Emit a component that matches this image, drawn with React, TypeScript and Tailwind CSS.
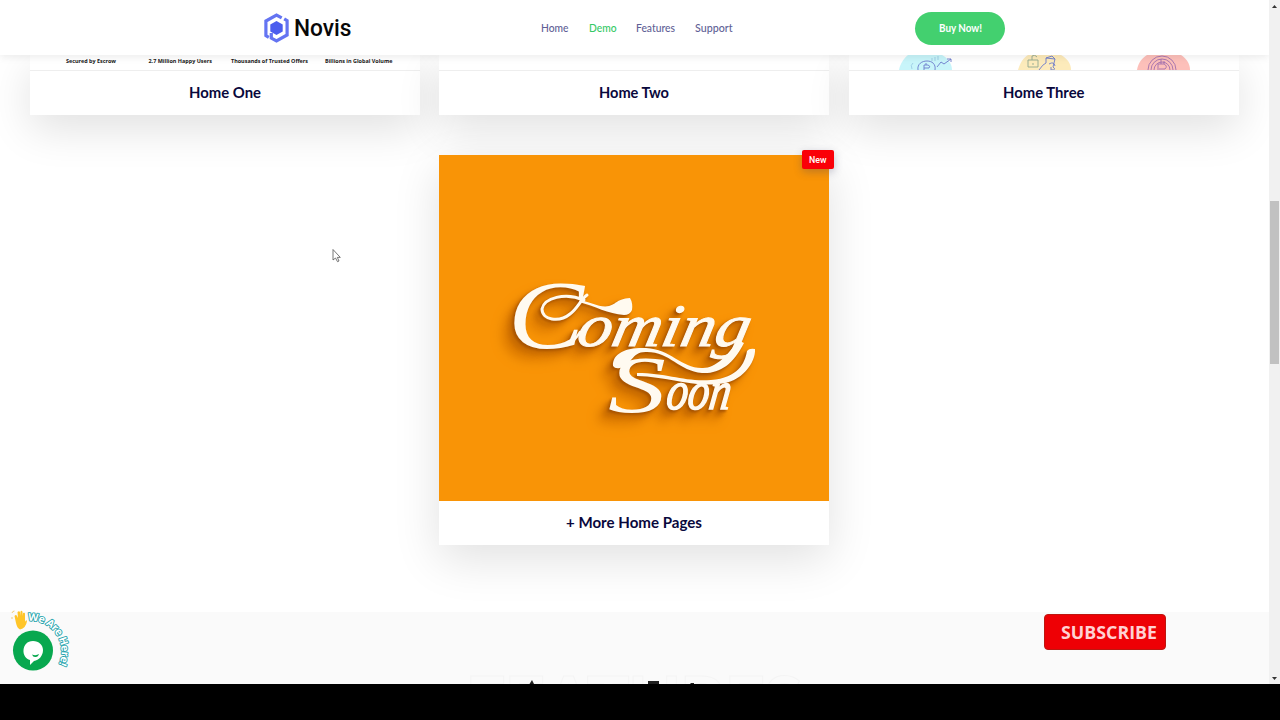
import React from 'react';

const navItems = [{
  name: 'Home',
  width: 27.5,
  active: false
}, {
  name: 'Demo',
  width: 27.5,
  active: true
}, {
  name: 'Features',
  width: 39,
  active: false
}, {
  name: 'Support',
  width: 37.5,
  active: false
}];

const stats = [
  { label: 'Secured by Escrow', x: 36, width: 50 },
  { label: '2.7 Million Happy Users', x: 118.5, width: 63.5 },
  { label: 'Thousands of Trusted Offers', x: 201, width: 77 },
  { label: 'Billions in Global Volume', x: 295, width: 67.5 },
];

const Label = ({ text, width, size, color, weight = 600, font = 'Lato' }: {
  text: string; width: number; size: number; color: string; weight?: number; font?: string;
}) => <svg width={width} height={size * 1.5} className="overflow-visible shrink-0">
    <text x="0" y={size * 1.1} textLength={width} lengthAdjust="spacingAndGlyphs" fontSize={size} fontWeight={weight} fill={color} fontFamily={`${font}, sans-serif`}>{text}</text>
  </svg>;

const Logo = () => <a className="flex items-center gap-[5px]">
    <svg className="w-[25px] h-[30px]" viewBox="0 0 25 30">
      <g fill="none" stroke="#6474f2" strokeWidth="3.2">
        <path d="M4.8 24.3 L1.9 22.6 V8 L12.5 2 L17.7 4.9" />
        <path d="M20.2 5.9 L23.1 7.6 V22 L12.5 28 L7.3 25.1 V20" />
      </g>
      <path d="M12.5 8 L18.700 11.500 V18.600 L12.5 22 L6.300 18.600 V11.500 Z" fill="#4b5dee" />
    </svg>
    <Label text="Novis" width={57.5} size={24} color="#080808" weight={500} font="Roboto" />
  </a>;

const Header = () => <header className="relative z-20 h-[55px] shrink-0 bg-white shadow-[0_2px_8px_rgba(0,0,0,0.08)] flex items-center">
    <div className="w-[541px] pl-[264px] pt-px">
      <Logo />
    </div>
    <nav className="w-[374px] flex items-center gap-5">
      {navItems.map(item => <a key={item.name} className="pt-px">
          <Label text={item.name} width={item.width} size={10.8} color={item.active ? '#35c965' : '#5f5f96'} weight={500} />
        </a>)}
    </nav>
    <button className="w-[90px] h-[33px] mt-px rounded-full bg-[#43d06f] flex items-center justify-center">
      <Label text="Buy Now!" width={43} size={10.5} color="#ffffff" weight={700} />
    </button>
  </header>;

const HomeOnePreview = () => <svg className="w-full h-[15px] block" viewBox="0 0 390 15">
    {stats.map(s => <text key={s.label} x={s.x} y="8.2" textLength={s.width} lengthAdjust="spacingAndGlyphs" fontFamily="Open Sans, sans-serif" fontSize="5.7" fontWeight="700" fill="#161616">{s.label}</text>)}
  </svg>;

const HomeThreePreview = () => <svg className="w-full h-[15px] block" viewBox="0 0 390 15">
    <path d="M50 15 C51 9 55 3 59 0 H93 C99 3 103 9 103 15 Z" fill="#c8f5fa" />
    <path d="M169 15 C171 8 174 3 179 0 H212 C219 4 222 9 222 15 Z" fill="#fdebbb" />
    <path d="M288 15 C289 8 293 3 298 0 H332 C338 4 341 9 341 15 Z" fill="#fdc0ba" />
    <g fill="none" stroke="#6c7acc" strokeWidth=".9">
      <path d="M69 15 C68 9 73 6 78 6 S87 9 86 15 M75 15 V10 H79 Q82 11 80 13 H75 M77 8 V10 M88 12 L92 7 L95 9 L102 4 M98 4 H102 V7" />
      <path d="M83 6 V3 M86 6 V2 M89 5 V1 M63 14 Q61 10 64 8" stroke="#9bcce4" />
      <path d="M190 15 Q194 9 197 8 L197 3 L206 4 L204 12 Q208 15 202 15 M197 3 L203 1 L206 4 M200 9 Q205 6 206 11 M202 15 V12" />
      <path d="M179 5 H189 V12 H179 Z M183 5 V1 Q186 -1 188 2 M184 8 V10" stroke="#91a891" />
      <path d="M299 15 A14 14 0 0 1 327 15 M302 15 A11 11 0 0 1 324 15 M305 15 A8 8 0 0 1 321 15 M309 15 V9 H315 Q319 11 316 14 H310 M312 9 V4 M315 9 V6" stroke="#a26fae" />
    </g>
  </svg>;

const Card = ({ title, width, children }: { title: string; width: number; children?: React.ReactNode }) =>
  <article className="w-[390px] shrink-0 bg-white shadow-[0_14px_44px_rgba(0,0,0,0.12)]">
    {children}
    <div className="h-11 flex items-center justify-center">
      <Label text={title} width={width} size={14.6} color="#09083c" weight={700} />
    </div>
  </article>;

const ComingSoon = () => <svg className="w-[390px] h-[346px] block bg-[#f99406]" viewBox="0 0 390 346">
    <g className="[filter:drop-shadow(-2px_2px_1px_#a85400)_drop-shadow(-4px_4px_2px_#c86b00)_drop-shadow(-6px_6px_4px_#dc7a00)]">
      <g fill="#fffaf0" fontFamily="Liberation Serif, serif" fontStyle="italic">
        <text x="69" y="193" fontSize="98" textLength="76" lengthAdjust="spacingAndGlyphs">C</text>
        <g transform="translate(136 191) skewX(-12)">
          <text x="0" y="0" fontSize="60" textLength="172" lengthAdjust="spacingAndGlyphs" stroke="#fffaf0" strokeWidth="1">oming</text>
        </g>
        <text x="169" y="257" fontSize="80" textLength="58" lengthAdjust="spacingAndGlyphs">S</text>
        <g transform="translate(226 254) skewX(-8)">
          <text x="0" y="0" fontSize="54" textLength="64" lengthAdjust="spacingAndGlyphs" stroke="#fffaf0" strokeWidth="1.600">oon</text>
        </g>
      </g>
      {/* flourishes around the lettering */}
      <g fill="#fffaf0">
        <path d="M141 145 C151 147 161 153 170 151 C178 149 177 144 191 143 Q194 148 193 155 Q191 160 185 160 C169 159 156 151 140 147 Z" />
        <path d="M174 211 C173 197 190 192 207 193 C232 194 243 214 264 213 C277 213 289 200 299 185 L305 188 C294 210 280 219 263 218 C240 216 231 197 208 197 C192 196 193 211 181 213 Q176 214 174 211 Z" />
        <path d="M198 218 C229 218 245 227 272 225 C299 223 306 208 308 196 Q310 193 316 194 C317 207 303 228 279 229 C252 232 230 222 198 221 Z" />
      </g>
      <g fill="none" stroke="#fffaf0" strokeLinecap="round">
        <path d="M145 145 C126 137 105 143 103 154 C103 165 120 168 131 159 C139 153 142 144 148 140" strokeWidth="3" />
        <path d="M128 190 Q136 186 141 177" strokeWidth="2.500" />
      </g>
    </g>
  </svg>;

const Scrollbar = () => <aside className="w-[11px] shrink-0 bg-[#f1f1f1] flex flex-col items-center">
    <svg className="w-[11px] h-[201px]" viewBox="0 0 11 201"><path d="M3 8 L5.5 5 L8 8 Z" fill="#333" /></svg>
    <div className="w-[9px] h-[163px] bg-[#c1c1c1]" />
    <svg className="w-[11px] h-[320px]" viewBox="0 0 11 320"><path d="M3 313 L5.5 316 L8 313 Z" fill="#333" /></svg>
  </aside>;

const ChatWidget = () => <svg className="absolute left-0 top-[604px] w-20 h-[72px]" viewBox="0 0 80 72">
    <defs>
      <path id="chat-arc" d="M26.500 17 A31 31 0 0 1 54 68" />
    </defs>
    <circle cx="33" cy="46.5" r="20" fill="#08a84f" />
    <path d="M33 37 C39 37 43 41 43 46 C43 52 39 56 34 57 L30 61 V56 C26 55 23 51 23.500 46 C24 41 27 37 33 37 Z" fill="#fff" />
    <path d="M32 50.500 Q36 52 39 50 Q38 53.500 35 53 Q33 53 32 50.500 Z" fill="#08a84f" />
    <path d="M16 19 L14.500 12 Q16 10 17 12 L18 14 L17.500 8 Q19 6.500 20 8 L20.500 12 V7.500 Q22 6 22.500 8 V12 L23 9 Q25 8 25 10 V18 Q26 15 27 17 Q26 24 20 25.500 Q17 24 16 19 Z" fill="#ffc529" />
    <path d="M12 9 Q12.500 7 14.500 7 M12 13 V15" fill="none" stroke="#ecc35b" strokeWidth=".8" />
    <text fontFamily="Open Sans, sans-serif" fontSize="10.500" fontWeight="700" fill="#fff" stroke="#25a3ac" strokeWidth="1.800" paintOrder="stroke" strokeLinejoin="round">
      <textPath href="#chat-arc" startOffset="1.500" textLength="64">We Are Here!</textPath>
    </text>
  </svg>;

const App = () => {
  return <div className="relative w-[1280px] h-[720px] bg-black overflow-hidden">
      <div className="flex h-[684px]">
        <main className="w-[1269px] shrink-0 bg-white flex flex-col overflow-hidden">
          <Header />
          <section className="h-[557px] shrink-0">
            <div className="flex gap-[19.500px] pl-[29.500px]">
              <Card title="Home One" width={72}>
                <div className="border-b border-[#eeeeee]"><HomeOnePreview /></div>
              </Card>
              <Card title="Home Two" width={70}>
                <div className="h-4 border-b border-[#eeeeee]" />
              </Card>
              <Card title="Home Three" width={81.5}>
                <div className="border-b border-[#eeeeee]"><HomeThreePreview /></div>
              </Card>
            </div>
            <div className="flex pl-[439px] pt-[39.500px]">
              <div className="relative">
                <Card title="+ More Home Pages" width={136}>
                  <ComingSoon />
                </Card>
                <span className="absolute -top-[5px] right-[-5px] w-8 h-[19px] rounded-[2px] bg-[#fa0008] shadow-[0_3px_8px_rgba(60,60,100,0.3)] flex items-center justify-center pt-px">
                  <Label text="New" width={17.5} size={9} color="#ffffff" weight={500} font="Roboto" />
                </span>
              </div>
            </div>
          </section>
          <section className="h-[72px] shrink-0 bg-[#fafafa] flex flex-col items-center justify-between overflow-hidden">
            <div className="w-full pl-[1044px] pt-[2px]">
              <button className="w-[122px] h-9 rounded-[4px] bg-[#ee0005] border border-[#bd1710] flex items-center justify-center pl-[7px] pt-[2px]">
                <Label text="SUBSCRIBE" width={96} size={17} color="#ffd1d3" weight={700} font="Open Sans" />
              </button>
            </div>
            {/* top edge of the next section heading */}
            <svg className="w-[340px] h-[10px] overflow-hidden" viewBox="0 0 340 10">
              <text x="0" y="55" textLength="338" fontFamily="Lato, sans-serif" fontSize="72" fontWeight="700" fill="none" stroke="#f4f4f4">FEATURES</text>
              <path d="M64.500 10 L67 6 L69 10 Z M183 7 H194 V10 H183 Z M225.500 9 H229 V10 H225.500 Z" fill="#202020" />
            </svg>
          </section>
        </main>
        <Scrollbar />
      </div>
      <ChatWidget />
      <svg className="absolute left-[332px] top-[248px] w-[10px] h-[15px] z-30" viewBox="0 0 10 15">
        <path d="M1 1.500 V12 L3.500 10 L5.500 13.700 L7 13 L5.300 9.400 H8.300 Z" fill="#fff" stroke="#555" strokeWidth=".8" />
      </svg>
    </div>;
};
export default App;
